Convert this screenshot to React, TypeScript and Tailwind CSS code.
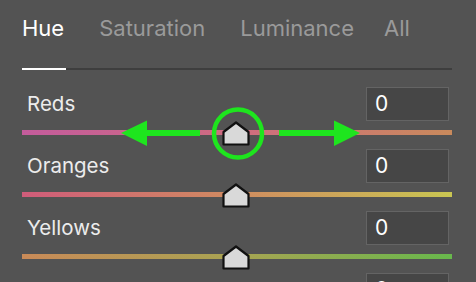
import React from "react";

const rows = [
  { label: "Reds", grad: "bg-[linear-gradient(to_right,#c45c9c,#cf6c80_50%,#c98a5c)]" },
  { label: "Oranges", grad: "bg-[linear-gradient(to_right,#d05c7a,#d08c60_50%,#c9c652)]" },
  { label: "Yellows", grad: "bg-[linear-gradient(to_right,#c98a58,#a8a452_50%,#68b84c)]" },
  { label: "Greens", grad: "bg-[linear-gradient(to_right,#9aa450,#5cb84c_50%,#4cb8a0)]" },
];

function Thumb() {
  return (
    <svg width="28" height="25" viewBox="0 0 28 25" className="absolute left-[200px] top-[-9px]">
      <path
        d="M1.5 11 L14 1.5 L26.5 11 L26.5 23.5 L1.5 23.5 Z"
        fill="#d9d9d9"
        stroke="#111"
        strokeWidth="2.2"
        strokeLinejoin="round"
      />
    </svg>
  );
}

export default function App() {
  return (
    <div
      className="relative w-[476px] h-[282px] overflow-hidden bg-[#535353]"
      style={{ fontFamily: "Inter, 'Noto Sans', sans-serif" }}
    >
      <div className="flex pl-[22px] pt-[15px] text-[22px] leading-[26px]">
        <span className="text-white">Hue</span>
        <span className="ml-[35px] text-[#9a9a9a]">Saturation</span>
        <span className="ml-[35px] text-[#9a9a9a]">Luminance</span>
        <span className="ml-[30px] text-[#9a9a9a]">All</span>
      </div>
      <div className="ml-[22px] mt-[27px] flex w-[430px] h-[2px] bg-[#3e3e3e]">
        <div className="w-[44px] h-[2px] bg-white" />
      </div>
      <div className="ml-[22px] mt-[17px] w-[430px] flex flex-col">
        {rows.map((r) => (
          <div key={r.label} className="h-[62px] flex flex-col">
            <div className="flex items-center justify-between h-[34px]">
              <span className="pl-[5px] text-[20.5px] text-[#ececec]">{r.label}</span>
              <div className="mr-[3px] w-[83px] h-[34px] border-[1.5px] border-[#646464] bg-[#464646] flex items-center pl-[8px] text-[21px] text-white">
                0
              </div>
            </div>
            <div className={`relative mt-[9px] h-[5px] ${r.grad}`}>
              <Thumb />
            </div>
          </div>
        ))}
      </div>
      <svg className="absolute left-0 top-0" width="476" height="282" viewBox="0 0 476 282">
        <circle cx="238" cy="133.5" r="24" fill="none" stroke="#1ee51e" strokeWidth="4.5" />
        <rect x="144" y="130" width="56" height="6" fill="#1ee51e" />
        <polygon points="121,133 147,120.5 147,146" fill="#1ee51e" />
        <rect x="279" y="130" width="57" height="6" fill="#1ee51e" />
        <polygon points="360,133 334,120.5 334,146" fill="#1ee51e" />
      </svg>
    </div>
  );
}
